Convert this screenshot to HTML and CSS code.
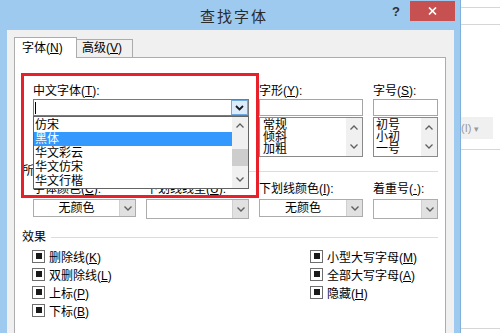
FILE: index.html
```html
<!DOCTYPE html>
<html>
<head>
<meta charset="utf-8">
<link rel="stylesheet" href="styles.css">
</head>
<body>
<div class="screen">
  <div class="window">
    <div class="titlebar">
      <div class="title">查找字体</div>
      <div class="help">?</div>
      <div class="close"><svg width="9" height="8" viewBox="0 0 9 8"><path d="M1 0.5L8 7.5M8 0.5L1 7.5" stroke="#fff" stroke-width="1.7" fill="none"/></svg></div>
    </div>
    <div class="client">
      <div class="tabs">
        <div class="tab active">字体(<u>N</u>)</div>
        <div class="tab">高级(<u>V</u>)</div>
      </div>
      <div class="panel">
        <div class="grid4">
          <div class="field span2">
            <div class="lbl">中文字体(<u>T</u>):</div>
            <div class="edit combo-a">
              <span class="caret"></span>
              <div class="btn-hot"><svg width="9" height="6" viewBox="0 0 9 6"><path d="M1 1L4.5 4.5L8 1" fill="none" stroke="#1a1a1a" stroke-width="1.8"/></svg></div>
            </div>
          </div>
          <div class="field">
            <div class="lbl">字形(<u>Y</u>):</div>
            <div class="edit"></div>
            <div class="list">
              <div class="items style-items"><div>常规</div><div>倾斜</div><div>加粗</div></div>
              <div class="sb">
                <div class="arr"><svg width="8" height="5" viewBox="0 0 8 5"><path d="M0.5 4.5L4 1L7.5 4.5" fill="none" stroke="#606060" stroke-width="1.3"/></svg></div>
                <div class="arr"><svg width="8" height="5" viewBox="0 0 8 5"><path d="M0.5 0.5L4 4L7.5 0.5" fill="none" stroke="#606060" stroke-width="1.3"/></svg></div>
              </div>
            </div>
          </div>
          <div class="field">
            <div class="lbl">字号(<u>S</u>):</div>
            <div class="edit"></div>
            <div class="list">
              <div class="items size-items"><div>初号</div><div>小初</div><div>一号</div></div>
              <div class="sb">
                <div class="arr"><svg width="8" height="5" viewBox="0 0 8 5"><path d="M0.5 4.5L4 1L7.5 4.5" fill="none" stroke="#606060" stroke-width="1.3"/></svg></div>
                <div class="arr"><svg width="8" height="5" viewBox="0 0 8 5"><path d="M0.5 0.5L4 4L7.5 0.5" fill="none" stroke="#606060" stroke-width="1.3"/></svg></div>
              </div>
            </div>
          </div>
        </div>

        <div class="group first"><span>所有文字</span><i class="rule"></i></div>

        <div class="grid4 row3">
          <div class="field">
            <div class="lbl lbl3">字体颜色(<u>C</u>):</div>
            <div class="cbo"><div class="txt">无颜色</div><div class="btn"><svg width="8" height="5" viewBox="0 0 8 5"><path d="M0.5 0.5L4 4L7.5 0.5" fill="none" stroke="#606060" stroke-width="1.4"/></svg></div></div>
          </div>
          <div class="field">
            <div class="lbl lbl3">下划线线型(<u>U</u>):</div>
            <div class="cbo tall"><div class="txt"></div><div class="btn"><svg width="8" height="5" viewBox="0 0 8 5"><path d="M0.5 0.5L4 4L7.5 0.5" fill="none" stroke="#606060" stroke-width="1.4"/></svg></div></div>
          </div>
          <div class="field">
            <div class="lbl lbl3">下划线颜色(<u>I</u>):</div>
            <div class="cbo"><div class="txt">无颜色</div><div class="btn"><svg width="8" height="5" viewBox="0 0 8 5"><path d="M0.5 0.5L4 4L7.5 0.5" fill="none" stroke="#606060" stroke-width="1.4"/></svg></div></div>
          </div>
          <div class="field">
            <div class="lbl lbl3">着重号(<u>·</u>):</div>
            <div class="cbo tall"><div class="txt"></div><div class="btn"><svg width="8" height="5" viewBox="0 0 8 5"><path d="M0.5 0.5L4 4L7.5 0.5" fill="none" stroke="#606060" stroke-width="1.4"/></svg></div></div>
          </div>
        </div>

        <div class="group second"><span>效果</span><i class="rule"></i></div>

        <div class="effects">
          <div class="col">
            <div class="cb"><span class="box"></span><span>删除线(<u>K</u>)</span></div>
            <div class="cb"><span class="box"></span><span>双删除线(<u>L</u>)</span></div>
            <div class="cb"><span class="box"></span><span>上标(<u>P</u>)</span></div>
            <div class="cb"><span class="box"></span><span>下标(<u>B</u>)</span></div>
          </div>
          <div class="col">
            <div class="cb"><span class="box"></span><span>小型大写字母(<u>M</u>)</span></div>
            <div class="cb"><span class="box"></span><span>全部大写字母(<u>A</u>)</span></div>
            <div class="cb"><span class="box"></span><span>隐藏(<u>H</u>)</span></div>
          </div>
        </div>

        <div class="dropdown">
          <div class="dd-items">
            <div>仿宋</div>
            <div class="sel">黑体</div>
            <div>华文彩云</div>
            <div>华文仿宋</div>
            <div>华文行楷</div>
          </div>
          <div class="dd-sb">
            <div class="dd-arr"><svg width="8" height="5" viewBox="0 0 8 5"><path d="M0.5 4.5L4 1L7.5 4.5" fill="none" stroke="#606060" stroke-width="1.3"/></svg></div>
            <div class="dd-track"><div class="thumb"></div></div>
            <div class="dd-arr"><svg width="8" height="5" viewBox="0 0 8 5"><path d="M0.5 0.5L4 4L7.5 0.5" fill="none" stroke="#606060" stroke-width="1.3"/></svg></div>
          </div>
        </div>

        <div class="highlight"></div>
      </div>
    </div>
  </div>
  <div class="bgapp">
    <div class="bl l1"></div>
    <div class="bl l2"></div>
    <div class="bgbtn">(I) <span class="tri">▾</span></div>
    <div class="bl l3"></div>
    <div class="bl l4"></div>
  </div>
</div>
</body>
</html>
```
FILE: styles.css
```css
* { box-sizing: border-box; }
html, body { margin: 0; padding: 0; }
body {
  width: 500px;
  height: 333px;
  overflow: hidden;
  background: #fff;
  font-family: "Liberation Sans", "Noto Sans CJK SC", sans-serif;
  font-size: 12px;
  color: #000;
}
u { text-decoration: underline; text-underline-offset: 1px; }

.screen { display: flex; height: 333px; }

.window {
  width: 461px;
  height: 333px;
  flex: none;
  background: #9ecaf0;
  border-right: 1px solid #7fb0dc;
  display: flex;
  flex-direction: column;
  overflow: hidden;
}

.titlebar { height: 30px; display: flex; align-items: flex-start; flex: none; }
.title {
  flex: 1;
  padding-left: 82px;
  text-align: center;
  font-family: "Noto Sans CJK SC", sans-serif;
  font-size: 15px;
  letter-spacing: 2px;
  line-height: 31px;
  color: #2b2b2b;
}
.help {
  width: 20px;
  margin-right: 4px;
  text-align: center;
  font-family: "Liberation Sans", sans-serif;
  font-weight: bold;
  font-size: 13px;
  line-height: 24px;
  color: #303030;
}
.close {
  width: 45px;
  height: 20px;
  margin-top: 1px;
  margin-right: 5px;
  background: #c75050;
  display: flex;
  align-items: center;
  justify-content: center;
}

.client {
  flex: 1;
  margin: 0 6px 0 7px;
  background: #f0f0f0;
  padding: 7px 8px 0 7px;
  overflow: hidden;
}

.tabs { display: flex; align-items: flex-end; height: 20px; }
.tab {
  height: 18px;
  width: 57px;
  margin-left: -1px;
  border: 1px solid #acacac;
  border-bottom: none;
  background: #f0f0f0;
  line-height: 17px;
  padding-left: 5px;
  white-space: nowrap;
}
.tab.active {
  height: 21px;
  width: 63px;
  margin-left: 0;
  margin-bottom: -1px;
  background: #fff;
  line-height: 20px;
  padding-left: 7px;
  position: relative;
  z-index: 2;
}

.panel {
  position: relative;
  height: 300px;
  border: 1px solid #acacac;
  background: #fff;
  padding: 26px 7px 0 7px;
}

.grid4 {
  display: grid;
  grid-template-columns: 103px 103px 104px 65px;
  column-gap: 10px;
  margin-left: 11px;
  align-items: start;
}
.span2 { grid-column: span 2; }
.lbl { height: 14px; line-height: 14px; white-space: nowrap; margin-bottom: 1px; }
.lbl3 { margin-bottom: 3px; }

.edit { height: 17px; border: 1px solid #a5a5a5; background: #fff; }
.combo-a {
  border-color: #7a7a7a;
  display: flex;
  align-items: stretch;
  justify-content: space-between;
}
.caret { width: 1px; height: 12px; background: #000; margin: 2px 0 0 1px; }
.btn-hot {
  width: 17px;
  border: 1px solid #6fa9e0;
  background: #dcecfc;
  display: flex;
  align-items: center;
  justify-content: center;
}

.list {
  height: 40px;
  margin-top: 1px;
  border: 1px solid #8a8a8a;
  display: flex;
  background: #fff;
}
.items { flex: 1; padding-top: 1px; }
.items div { height: 12px; line-height: 12px; white-space: nowrap; }
.style-items { padding-left: 3px; }
.size-items { padding-left: 2px; }
.sb { width: 16px; background: #f0f0f0; display: flex; flex-direction: column; }
.arr { flex: 1; display: flex; align-items: center; justify-content: center; }

.group {
  display: flex;
  align-items: center;
  height: 14px;
  line-height: 14px;
  white-space: nowrap;
}
.group.first { margin-top: 7px; }
.group.second { margin-top: 11px; }
.rule { flex: 1; height: 1px; background: #dcdcdc; margin-left: 5px; }

.row3 { margin-top: 4px; }
.cbo {
  height: 18px;
  border: 1px solid #acacac;
  background: #fff;
  display: flex;
}
.cbo.tall { height: 20px; }
.cbo .txt { flex: 1; text-align: center; line-height: 16px; white-space: nowrap; }
.cbo .btn {
  width: 16px;
  background: #e1e1e1;
  border-left: 1px solid #d0d0d0;
  display: flex;
  align-items: center;
  justify-content: center;
}

.effects {
  margin-top: 3px;
  margin-left: 10px;
  display: grid;
  grid-template-columns: 278px auto;
}
.cb { display: flex; align-items: center; height: 18px; gap: 4px; white-space: nowrap; }
.box {
  width: 13px;
  height: 13px;
  border: 1px solid #6e6e6e;
  background: #fff;
  display: flex;
  align-items: center;
  justify-content: center;
  flex: none;
}
.box::after { content: ""; width: 6px; height: 6px; background: #1a1a1a; }

/* open drop-down list (overlays the dialog) */
.dropdown {
  position: absolute;
  left: 18px;
  top: 58px;
  width: 216px;
  height: 73px;
  border: 1px solid #646464;
  background: #fff;
  display: flex;
  z-index: 3;
}
.dd-items { flex: 1; padding-top: 1px; }
.dd-items div { height: 14px; line-height: 14px; padding-left: 1px; white-space: nowrap; }
.dd-items .sel { background: #3399ff; color: #fff; }
.dd-sb { width: 16px; background: #f0f0f0; display: flex; flex-direction: column; }
.dd-arr { height: 17px; display: flex; align-items: center; justify-content: center; }
.dd-track { flex: 1; padding-top: 15px; }
.thumb { height: 17px; background: #cdcdcd; }

/* red annotation box */
.highlight {
  position: absolute;
  left: 6px;
  top: 15px;
  width: 238px;
  height: 125px;
  border: 3px solid #e8202a;
  z-index: 4;
}

/* background application on the right */
.bgapp { flex: 1; background: #fff; }
.bl { height: 1px; background: #d6d6d6; }
.l1 { margin-top: 7px; }
.l2 { margin-top: 16px; }
.bgbtn {
  margin-top: 92px;
  height: 22px;
  width: 32px;
  background: #f0f0f0;
  color: #9a9a9a;
  font-size: 11px;
  line-height: 22px;
  white-space: nowrap;
}
.tri { font-size: 9px; }
.l3 { margin-top: 10px; }
.l4 { margin-top: 178px; }
```
